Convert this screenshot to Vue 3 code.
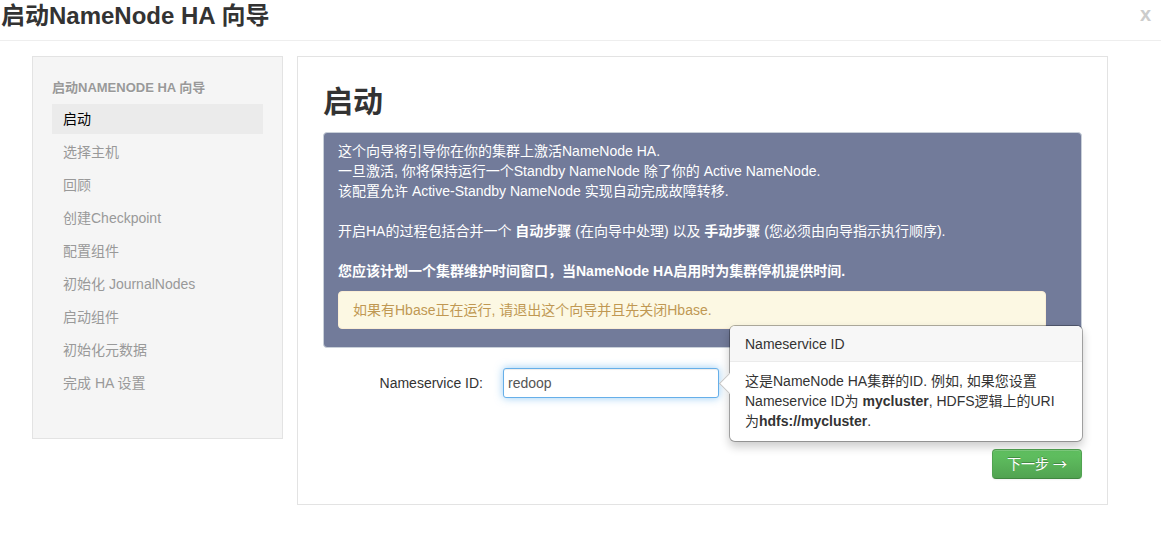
<script setup>
import { ref } from 'vue'

const steps = [
  '启动',
  '选择主机',
  '回顾',
  '创建Checkpoint',
  '配置组件',
  '初始化 JournalNodes',
  '启动组件',
  '初始化元数据',
  '完成 HA 设置',
]
const current = ref(0)
const nameserviceId = ref('redoop')
</script>

<template>
  <div class="wizard">
    <header class="header">
      <h1>启动NameNode HA 向导</h1>
      <button class="close" type="button" aria-label="关闭">x</button>
    </header>

    <div class="body">
      <nav class="sidebar" aria-label="启动NameNode HA 向导">
        <h2 class="nav-title">启动NAMENODE HA 向导</h2>
        <ul>
          <li v-for="(step, i) in steps" :key="step">
            <a href="#" :class="{ active: i === current }" @click.prevent="current = i">{{ step }}</a>
          </li>
        </ul>
      </nav>

      <main class="content">
        <h2 class="content-title">启动</h2>

        <section class="info">
          <p>
            这个向导将引导你在你的集群上激活NameNode HA.<br />
            一旦激活, 你将保持运行一个Standby NameNode 除了你的 Active NameNode.<br />
            该配置允许 Active-Standby NameNode 实现自动完成故障转移.
          </p>
          <p>开启HA的过程包括合并一个 <b>自动步骤</b> (在向导中处理) 以及 <b>手动步骤</b> (您必须由向导指示执行顺序).</p>
          <p class="plan">您应该计划一个集群维护时间窗口，当NameNode HA启用时为集群停机提供时间.</p>
          <div class="warning">如果有Hbase正在运行, 请退出这个向导并且先关闭Hbase.</div>
        </section>

        <form @submit.prevent>
          <div class="row">
            <label for="nameservice">Nameservice ID:</label>
            <div class="field">
              <input id="nameservice" v-model="nameserviceId" type="text" aria-describedby="hint" />
              <div id="hint" class="popover" role="tooltip">
                <h3>Nameservice ID</h3>
                <p>
                  这是NameNode HA集群的ID. 例如, 如果您设置Nameservice ID为 <b>mycluster</b>, HDFS逻辑上的URI为<b>hdfs://mycluster</b>.
                </p>
              </div>
            </div>
          </div>
          <div class="actions">
            <button class="next" type="submit">下一步 <span class="arrow">→</span></button>
          </div>
        </form>
      </main>
    </div>
  </div>
</template>

<style>
body {
  background: #fff;
}
</style>

<style scoped>
.wizard {
  color: #333;
  font-family: "Liberation Sans", "Noto Sans CJK SC", sans-serif;
  font-size: 14px;
  line-height: 20px;
}
.wizard * {
  box-sizing: border-box;
}
h1,
h2,
h3,
p,
ul {
  margin: 0;
  padding: 0;
}
.header {
  display: flex;
  justify-content: space-between;
  align-items: flex-start;
  height: 41px;
  padding-right: 10px;
  border-bottom: 1px solid #eee;
}
.header h1 {
  padding-left: 1px;
  font-size: 24px;
  line-height: 32px;
}
.close {
  padding: 0;
  border: 0;
  background: none;
  color: #ccc;
  font: bold 20px/28px "Liberation Sans", sans-serif;
  cursor: pointer;
}
.body {
  display: flex;
  align-items: flex-start;
  gap: 14px;
  padding: 15px 53px 34px 32px;
}
.sidebar {
  flex: none;
  width: 251px;
  padding: 21px 19px 40px;
  border: 1px solid #e3e3e3;
  background: #f5f5f5;
}
.nav-title {
  color: #999;
  font-size: 13px;
  line-height: 20px;
  text-shadow: 0 1px 0 rgba(255, 255, 255, 0.5);
}
.sidebar ul {
  display: flex;
  flex-direction: column;
  gap: 3px;
  padding-top: 6px;
  list-style: none;
}
.sidebar a {
  display: block;
  padding: 5px 11px;
  color: #999;
  text-decoration: none;
}
.sidebar a.active {
  background: #ebebeb;
  color: #000;
}
.content {
  flex: 1;
  min-width: 0;
  padding: 25px;
  border: 1px solid #e3e3e3;
}
.content-title {
  padding-bottom: 10px;
  font-size: 30px;
  line-height: 40px;
}
.info {
  display: flex;
  flex-direction: column;
  padding: 8px 35px 18px 14px;
  border: 1px solid #c9d0d9;
  border-radius: 4px;
  background: #727b9a;
  color: #fff;
}
.info p + p {
  margin-top: 20px;
}
.info .plan {
  font-weight: bold;
}
.warning {
  margin-top: 10px;
  padding: 8px 14px;
  border: 1px solid #fbeed5;
  border-radius: 4px;
  background: #fcf8e3;
  color: #c09853;
}
.row {
  display: flex;
  align-items: center;
  gap: 20px;
  padding-top: 20px;
}
.row label {
  width: 160px;
  text-align: right;
}
.field {
  position: relative;
  display: flex;
}
.field input {
  width: 216px;
  height: 30px;
  padding: 4px;
  border: 1px solid #66afe9;
  border-radius: 3px;
  outline: 0;
  background: #fff;
  box-shadow: inset 0 1px 1px rgba(0, 0, 0, 0.075), 0 0 8px rgba(82, 168, 236, 0.6);
  color: #555;
  font: inherit;
}
.popover {
  position: absolute;
  top: -43px;
  left: 100%;
  width: 354px;
  margin-left: 10px;
  border: 1px solid rgba(0, 0, 0, 0.3);
  border-radius: 6px;
  background: #fff;
  background-clip: padding-box;
  box-shadow: 0 5px 10px rgba(0, 0, 0, 0.2);
}
.popover::before {
  content: "";
  position: absolute;
  top: 50px;
  left: -8px;
  width: 14px;
  height: 14px;
  border: solid #c4c4c4;
  border-width: 0 0 1px 1px;
  background: #fff;
  transform: rotate(45deg);
}
.popover h3 {
  padding: 9px 15px 8px;
  border-bottom: 1px solid #ebebeb;
  border-radius: 5px 5px 0 0;
  background: #f7f7f7;
  font-size: 14px;
  font-weight: normal;
  line-height: 18px;
}
.popover p {
  position: relative;
  padding: 9px 15px 10px;
}
.actions {
  display: flex;
  justify-content: flex-end;
  padding-top: 51px;
}
.next {
  padding: 4px 14px;
  border: 1px solid;
  border-color: #51a351 #51a351 #408740;
  border-radius: 4px;
  background: linear-gradient(#62c462, #51a351);
  box-shadow: inset 0 1px 0 rgba(255, 255, 255, 0.2), 0 1px 2px rgba(0, 0, 0, 0.05);
  color: #fff;
  font: inherit;
  text-shadow: 0 -1px 0 rgba(0, 0, 0, 0.25);
  cursor: pointer;
}
.arrow {
  font-family: "Noto Sans CJK SC", sans-serif;
  line-height: 1;
}
</style>
